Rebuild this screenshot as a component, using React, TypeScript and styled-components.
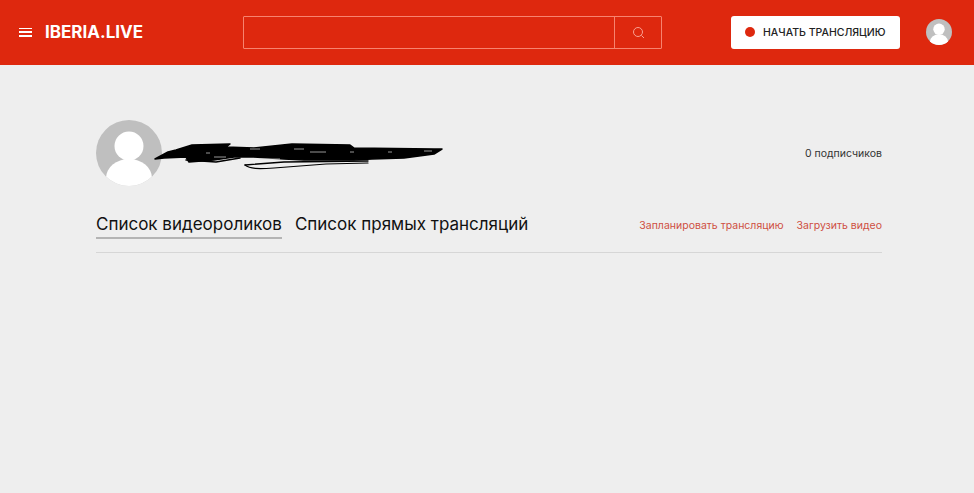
import React from "react";
import styled, { createGlobalStyle } from "styled-components";

const Global = createGlobalStyle`
  html, body { margin: 0; padding: 0; background: #eeeeee; }
  body { font-family: Inter, "Liberation Sans", sans-serif; }
`;

const Page = styled.div`
  width: 974px;
  height: 493px;
  overflow: hidden;
  background: #eeeeee;
`;

const Header = styled.header`
  height: 65px;
  background: #de280e;
  display: flex;
  align-items: center;
  padding: 0 22px 1px 19px;
  box-sizing: border-box;
`;

const Burger = styled.div`
  width: 13px;
  height: 9px;
  display: flex;
  flex-direction: column;
  justify-content: space-between;
  margin-right: 13px;
  span { display: block; height: 1.5px; background: #fff; }
`;

const Logo = styled.div`
  width: 198px;
  font-weight: 700;
  font-size: 17px;
  line-height: 20px;
  color: #fff;
`;

const Search = styled.div`
  width: 419px;
  height: 33px;
  box-sizing: border-box;
  border: 1px solid #f7836f;
  border-radius: 1px;
  display: flex;
  margin-right: 69px;
`;

const SearchField = styled.div`flex: 1;`;

const SearchButton = styled.div`
  width: 46px;
  border-left: 1px solid #f7836f;
  display: flex;
  align-items: center;
  justify-content: center;
`;

const LiveButton = styled.div`
  width: 169px;
  height: 33px;
  background: #fff;
  border-radius: 3px;
  display: flex;
  align-items: center;
  padding-left: 14px;
  box-sizing: border-box;
  gap: 8px;
  margin-right: 26px;
  font-size: 10.5px;
  font-weight: 500;
  color: #222;
  white-space: nowrap;
`;

const LiveDot = styled.span`
  width: 10px;
  height: 10px;
  border-radius: 50%;
  background: #de280e;
`;

const Main = styled.main`
  padding: 55px 92px 0 96px;
`;

const Profile = styled.section`
  display: flex;
  align-items: center;
  height: 66px;
`;

const Scribble = styled.svg`
  width: 290px;
  height: 30px;
  margin: 10px 0 0 -8px;
  flex: none;
`;

const Subscribers = styled.div`
  margin-left: auto;
  font-size: 10.5px;
  color: #333;
`;

const TabBar = styled.nav`
  margin-top: 25px;
  height: 41px;
  border-bottom: 1px solid #d6d6d6;
  display: flex;
  align-items: flex-start;
`;

const Tab = styled.div<{ $active?: boolean }>`
  height: 26px;
  line-height: 27px;
  font-size: 17px;
  color: #111;
  white-space: nowrap;
  margin-right: 13px;
  border-bottom: 2px solid ${(p) => (p.$active ? "#b4b4b4" : "transparent")};
`;

const Actions = styled.div`
  margin-left: auto;
  display: flex;
  gap: 13px;
  padding-top: 8px;
`;

const ActionLink = styled.a`
  font-size: 10.5px;
  line-height: 14px;
  color: #cf4f42;
  white-space: nowrap;
`;

const Avatar = ({ size }: { size: number }) => (
  <svg width={size} height={size} viewBox="0 0 66 66" style={{ flex: "none" }}>
    <defs>
      <clipPath id={`c${size}`}>
        <circle cx="33" cy="33" r="33" />
      </clipPath>
    </defs>
    <circle cx="33" cy="33" r="33" fill="#bfbfbf" />
    <g clipPath={`url(#c${size})`} fill="#fff">
      <circle cx="33" cy="26" r="14.5" />
      <ellipse cx="33" cy="58" rx="23" ry="19" />
    </g>
  </svg>
);

export default function App() {
  return (
    <Page>
      <Global />
      <Header>
        <Burger>
          <span />
          <span />
          <span />
        </Burger>
        <Logo>IBERIA.LIVE</Logo>
        <Search>
          <SearchField />
          <SearchButton>
            <svg width="13" height="13" viewBox="0 0 13 13" fill="none" stroke="#f9a193" strokeWidth="1">
              <circle cx="6" cy="6" r="4.5" />
              <path d="M9.4 9.4 L12 12" />
            </svg>
          </SearchButton>
        </Search>
        <LiveButton>
          <LiveDot />
          НАЧАТЬ ТРАНСЛЯЦИЮ
        </LiveButton>
        <Avatar size={26} />
      </Header>
      <Main>
        <Profile>
          <Avatar size={66} />
          <Scribble viewBox="0 0 290 30">
            <g fill="#000" stroke="#000" strokeLinejoin="round" strokeLinecap="round">
              <path strokeWidth="1.5" d="M1 16 L14 9 L22 7 L38 2 L76 1 L72 4 L100 5 L138 1 L196 2 L200 5 L280 6 L288 6 L280 11 L250 15 L218 16 L200 17 L150 17 L130 16 L100 14 L80 14 L60 17 L35 19 L32 14 L10 15 Z" />
              <path strokeWidth="1.2" fill="none" d="M91 22 C96 26 104 26 120 25 L172 21 L214 20" />
              <path strokeWidth="1.4" fill="none" d="M91 22 L130 19 L214 18" />
              <path strokeWidth="1.5" fill="none" d="M32 17 L62 19 L86 15" />
            </g>
            <g stroke="#d8d8d8" strokeWidth="0.7" fill="none">
              <path d="M52 10 L56 10 M96 6 L106 6 M140 6 L150 6 M156 9 L172 9 M196 9 L200 9 M234 9 L238 9 M270 8 L278 8" />
              <path d="M60 14 L72 14 M106 16 L126 16" />
            </g>
          </Scribble>
          <Subscribers>0 подписчиков</Subscribers>
        </Profile>
        <TabBar>
          <Tab $active>Список видеороликов</Tab>
          <Tab>Список прямых трансляций</Tab>
          <Actions>
            <ActionLink>Запланировать трансляцию</ActionLink>
            <ActionLink>Загрузить видео</ActionLink>
          </Actions>
        </TabBar>
      </Main>
    </Page>
  );
}
